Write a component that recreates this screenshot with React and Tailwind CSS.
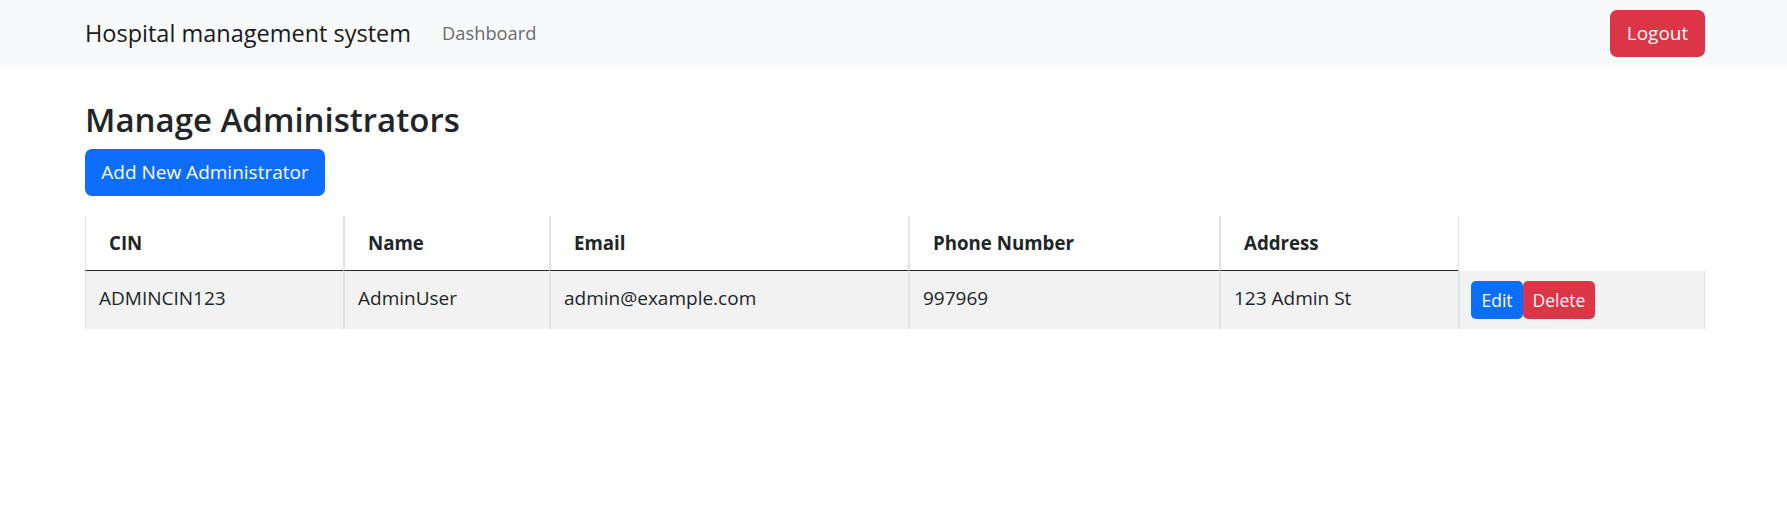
import React from 'react';

// Admin list page: navbar, title, add button and a one-row table
const admins = [
  {
    cin: 'ADMINCIN123',
    name: 'AdminUser',
    email: 'admin@example.com',
    phone: '997969',
    address: '123 Admin St',
  },
];

const columns = ['CIN', 'Name', 'Email', 'Phone Number', 'Address'];

const gridCols = 'grid grid-cols-[258px_206px_359px_311px_239px_247px]';

export default function App() {
  return (
    <div className="min-h-[530px] bg-white text-[#212529] font-['Open_Sans',sans-serif]">
      {/* Navbar */}
      <nav className="h-[67px] bg-[#f8f9fa]">
        <div className="w-[1620px] ml-[85px] h-full flex items-center justify-between">
          <div className="flex items-center">
            <span className="text-[23.5px] text-[#1a1a1a] leading-none">Hospital management system</span>
            <a className="ml-[31px] text-[18.3px] text-[#6b6b6b] leading-none">Dashboard</a>
          </div>
          <button className="w-[95px] h-[47px] rounded-[7px] bg-[#dc3545] text-white text-[19px]">
            Logout
          </button>
        </div>
      </nav>

      <main className="w-[1620px] ml-[85px]">
        <h1 className="mt-[32px] text-[33px] font-semibold leading-[42px]">Manage Administrators</h1>

        <button className="mt-[8px] w-[240px] h-[47px] rounded-[7px] bg-[#0d6efd] text-white text-[19px]">
          Add New Administrator
        </button>

        {/* Table */}
        <div className="mt-[20px]">
          <div className={`${gridCols} h-[55px]`}>
            {columns.map((col, i) => (
              <div
                key={col}
                className={`flex items-center pl-[23px] border-b border-b-[#212529] font-bold text-[18.7px] ${
                  i === 0 ? 'border-l border-l-[#dee2e6]' : 'border-l-2 border-l-[#dee2e6]'
                }`}
              >
                {col}
              </div>
            ))}
            <div className="border-l border-l-[#dee2e6]" />
          </div>

          {admins.map((a) => (
            <div key={a.cin} className={`${gridCols} h-[58px] bg-[#f2f2f2] text-[19px]`}>
              <div className="flex items-center pb-[4px] pl-[13px] border-l border-l-[#dee2e6]">{a.cin}</div>
              <div className="flex items-center pb-[4px] pl-[13px] border-l-2 border-l-[#dee2e6]">{a.name}</div>
              <div className="flex items-center pb-[4px] pl-[13px] border-l-2 border-l-[#dee2e6]">{a.email}</div>
              <div className="flex items-center pb-[4px] pl-[13px] border-l-2 border-l-[#dee2e6]">{a.phone}</div>
              <div className="flex items-center pb-[4px] pl-[13px] border-l-2 border-l-[#dee2e6]">{a.address}</div>
              <div className="flex items-center pl-[11px] border-l-2 border-l-[#dee2e6] border-r border-r-[#dee2e6]">
                <button className="w-[52px] h-[38px] rounded-[5px] bg-[#0d6efd] text-white text-[17.5px]">Edit</button>
                <button className="w-[72px] h-[38px] rounded-[5px] bg-[#dc3545] text-white text-[17.5px]">Delete</button>
              </div>
            </div>
          ))}
        </div>
      </main>
    </div>
  );
}
